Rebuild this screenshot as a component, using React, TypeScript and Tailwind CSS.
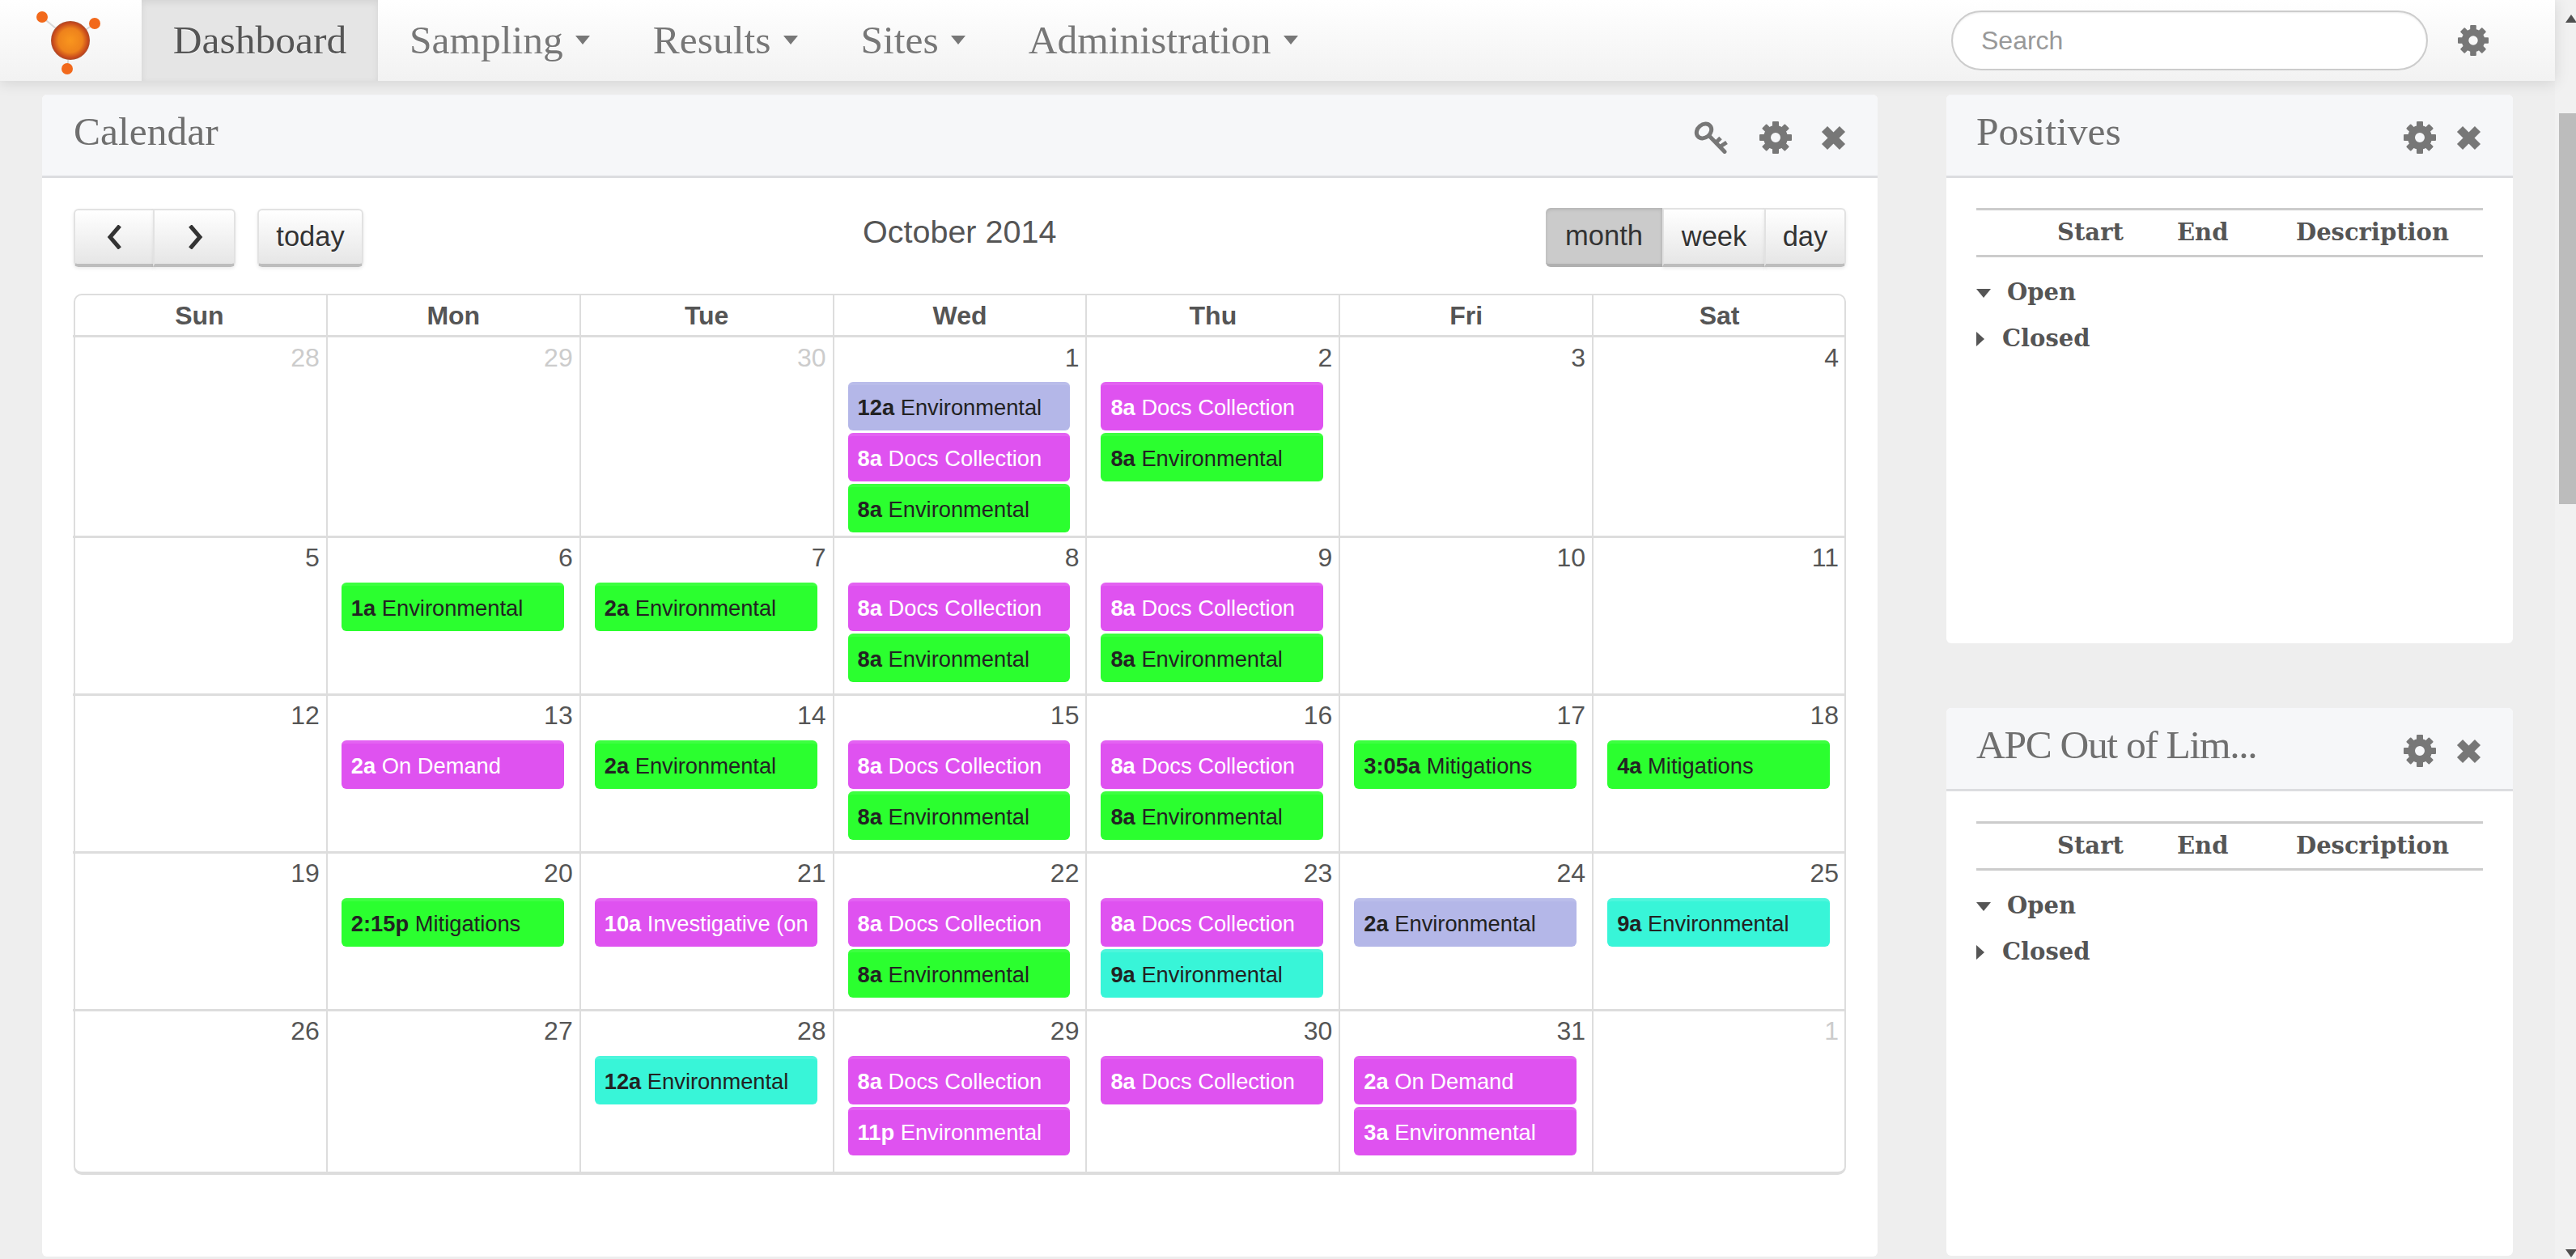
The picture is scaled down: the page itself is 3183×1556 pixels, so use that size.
import React from "react";

type Ev = { t: string; n: string; c: "g" | "p" | "l" | "c" };
type Day = { d: number; o?: boolean; e?: Ev[] };

const docs = (t = "8a"): Ev => ({ t, n: "Docs Collection", c: "p" });
const env = (t = "8a", c: Ev["c"] = "g"): Ev => ({ t, n: "Environmental", c });

const rows: { h: string; days: Day[] }[] = [
  {
    h: "h-[248px]",
    days: [
      { d: 28, o: true },
      { d: 29, o: true },
      { d: 30, o: true },
      { d: 1, e: [env("12a", "l"), docs(), env()] },
      { d: 2, e: [docs(), env()] },
      { d: 3 },
      { d: 4 },
    ],
  },
  {
    h: "h-[195px]",
    days: [
      { d: 5 },
      { d: 6, e: [env("1a")] },
      { d: 7, e: [env("2a")] },
      { d: 8, e: [docs(), env()] },
      { d: 9, e: [docs(), env()] },
      { d: 10 },
      { d: 11 },
    ],
  },
  {
    h: "h-[195px]",
    days: [
      { d: 12 },
      { d: 13, e: [{ t: "2a", n: "On Demand", c: "p" }] },
      { d: 14, e: [env("2a")] },
      { d: 15, e: [docs(), env()] },
      { d: 16, e: [docs(), env()] },
      { d: 17, e: [{ t: "3:05a", n: "Mitigations", c: "g" }] },
      { d: 18, e: [{ t: "4a", n: "Mitigations", c: "g" }] },
    ],
  },
  {
    h: "h-[195px]",
    days: [
      { d: 19 },
      { d: 20, e: [{ t: "2:15p", n: "Mitigations", c: "g" }] },
      { d: 21, e: [{ t: "10a", n: "Investigative (on", c: "p" }] },
      { d: 22, e: [docs(), env()] },
      { d: 23, e: [docs(), env("9a", "c")] },
      { d: 24, e: [env("2a", "l")] },
      { d: 25, e: [env("9a", "c")] },
    ],
  },
  {
    h: "h-[198px]",
    days: [
      { d: 26 },
      { d: 27 },
      { d: 28, e: [env("12a", "c")] },
      { d: 29, e: [docs(), env("11p", "p")] },
      { d: 30, e: [docs()] },
      { d: 31, e: [{ t: "2a", n: "On Demand", c: "p" }, env("3a", "p")] },
      { d: 1, o: true },
    ],
  },
];

const evClass: Record<Ev["c"], string> = {
  g: "bg-[#2bff2f] text-[#222] border-[#3dff40]",
  p: "bg-[#df52f0] text-white border-[#e362f2]",
  l: "bg-[#b4b7e8] text-[#222] border-[#babdea]",
  c: "bg-[#38f5d8] text-[#222] border-[#4df6dc]",
};

const serif = "font-['Liberation_Serif',serif]";

function Gear({ className }: { className: string }) {
  return (
    <svg viewBox="0 0 40 40" className={className} fill="#777">
      <circle cx="20" cy="20" r="10.5" fill="none" stroke="#777" strokeWidth="9" />
      {[0, 45, 90, 135, 180, 225, 270, 315].map((a) => (
        <rect key={a} x="16" y="0" width="8" height="9" rx="1" transform={`rotate(${a} 20 20)`} />
      ))}
    </svg>
  );
}

function Cross({ className }: { className: string }) {
  return (
    <svg viewBox="0 0 31 31" className={className} fill="none" stroke="#777" strokeWidth="10">
      <path d="M4.5 4.5 26.5 26.5M26.5 4.5 4.5 26.5" />
    </svg>
  );
}

function Key({ className }: { className: string }) {
  return (
    <svg viewBox="0 0 43 40" className={className} fill="none" stroke="#777" strokeWidth="5" strokeLinecap="round">
      <ellipse cx="12.5" cy="12" rx="10" ry="8" transform="rotate(-40 12.5 12)" />
      <path d="M20 19 38 37.5" />
      <path d="M27 26.5 33 20.5M32 31.5 40.5 26" strokeLinecap="butt" />
    </svg>
  );
}

function Caret() {
  return <span className="ml-[15px] mt-[-2px] inline-block h-0 w-0 border-x-[9px] border-t-[11px] border-x-transparent border-t-[#777]" />;
}

function NavItem({ label }: { label: string }) {
  return (
    <div className="flex h-full items-center px-[39px] text-[#777] [text-shadow:0_1px_0_#fff]">
      <span>{label}</span>
      <Caret />
    </div>
  );
}

function Navbar() {
  return (
    <nav className={`relative z-10 flex h-[100px] w-[3157px] shrink-0 items-center bg-gradient-to-b from-white to-[#f2f2f2] shadow-[0_2px_18px_rgba(0,0,0,0.12)] ${serif} text-[49.5px]`}>
      <div className="flex h-full w-[175px] shrink-0 items-center justify-start">
        <svg width="175" height="100" viewBox="0 0 175 100">
          <defs>
            <radialGradient id="orb">
              <stop offset="0%" stopColor="#f9961e" />
              <stop offset="62%" stopColor="#ee821c" />
              <stop offset="92%" stopColor="#c4461c" />
              <stop offset="100%" stopColor="#a8522f" />
            </radialGradient>
          </defs>
          <path d="M52 21 87 50 117 29M87 50 83 85" stroke="#d8d8d8" strokeWidth="2" fill="none" />
          <circle cx="87" cy="50" r="24" fill="url(#orb)" />
          <circle cx="52" cy="21" r="7" fill="#f2691b" />
          <circle cx="117" cy="29" r="7" fill="#f2691b" />
          <circle cx="83" cy="85" r="7" fill="#f2691b" />
        </svg>
      </div>
      <div className="flex h-full w-[292px] items-center justify-center bg-[#e5e5e5] text-[#555] shadow-[inset_0_3px_9px_rgba(0,0,0,0.08)] [text-shadow:0_1px_0_#fff]">
        Dashboard
      </div>
      <NavItem label="Sampling" />
      <NavItem label="Results" />
      <NavItem label="Sites" />
      <NavItem label="Administration" />
      <div className="flex-1" />
      <div className="flex h-[74px] w-[589px] items-center rounded-[37px] border-2 border-[#ccc] bg-white pl-[35px] font-['Liberation_Sans',sans-serif] text-[32px] text-[#999] shadow-[inset_0_1px_2px_rgba(0,0,0,0.08)]">
        Search
      </div>
      <Gear className="ml-[37px] mr-[82px] h-[38px] w-[38px]" />
    </nav>
  );
}

function ToolButton({ className, children }: { className: string; children: React.ReactNode }) {
  return (
    <div className={`flex items-center justify-center border-2 border-b-4 border-[#e2e2e2] border-b-[#bdbdbd] bg-gradient-to-b from-white to-[#e6e6e6] text-[34.5px] text-[#333] shadow-[0_2px_4px_rgba(0,0,0,0.08)] [text-shadow:0_1px_2px_rgba(255,255,255,0.75)] ${className}`}>
      {children}
    </div>
  );
}

function Calendar() {
  return (
    <section className="h-[1436px] w-[2268px] shrink-0 overflow-hidden rounded-[6px] bg-white">
      <header className="flex h-[103px] items-center border-b-[3px] border-[#dcdde0] bg-[#f6f7f9] pl-[39px] pr-[39px]">
        <h2 className={`${serif} -mt-[8px] flex-1 text-[49.5px] font-normal text-[#6f6f6f]`}>Calendar</h2>
        <div className="flex items-center pt-[6px]">
          <Key className="h-[40px] w-[43px]" />
          <Gear className="ml-[38px] h-[40px] w-[40px]" />
          <Cross className="ml-[36px] h-[31px] w-[31px]" />
        </div>
      </header>
      <div className="pl-[39px] pt-[37px]">
        <div className="flex h-[73px] w-[2190px] items-start">
          <ToolButton className="mt-[1px] h-[72px] w-[100px] rounded-l-[6px]">
            <svg width="24" height="30" viewBox="0 0 24 30" fill="none" stroke="#333" strokeWidth="5"><path d="M19 1 7 15 19 29" /></svg>
          </ToolButton>
          <ToolButton className="-ml-[2px] mt-[1px] h-[72px] w-[102px] rounded-r-[6px] pl-[4px]">
            <svg width="24" height="30" viewBox="0 0 24 30" fill="none" stroke="#333" strokeWidth="5"><path d="M5 1 17 15 5 29" /></svg>
          </ToolButton>
          <ToolButton className="ml-[27px] mt-[1px] h-[72px] w-[131px] rounded-[6px]">today</ToolButton>
          <div className="flex-1 pl-[617px] pt-[6px] font-['Liberation_Sans',sans-serif] text-[39.5px] leading-[46px] text-[#555]">October 2014</div>
          <div className="flex h-[73px] w-[371px]">
            <div className="flex h-full w-[144px] items-center justify-center rounded-l-[6px] border-b-4 border-[#b0b0b0] bg-[#cbcbcb] text-[34.5px] text-[#333] shadow-[inset_0_2px_4px_rgba(0,0,0,0.12)]">month</div>
            <ToolButton className="h-full w-[128px]">week</ToolButton>
            <ToolButton className="-ml-[2px] h-full w-[101px] rounded-r-[6px]">day</ToolButton>
          </div>
        </div>
        <div className="mt-[33px] w-[2190px] rounded-[10px] border-2 border-b-4 border-[#ddd] font-['Liberation_Sans',sans-serif]">
          <div className="-ml-[3px] -mr-[1px] grid h-[52px] grid-cols-7 border-b-[3px] border-[#ddd]">
            {["Sun", "Mon", "Tue", "Wed", "Thu", "Fri", "Sat"].map((d, i) => (
              <div key={d} className={`flex items-center justify-center text-[32px] font-bold text-[#555] ${i ? "border-l-2 border-[#ddd]" : ""}`}>{d}</div>
            ))}
          </div>
          {rows.map((r, ri) => (
            <div key={ri} className={`-ml-[3px] -mr-[1px] grid grid-cols-7 ${r.h} ${ri < 4 ? "border-b-[3px] border-[#ddd]" : ""}`}>
              {r.days.map((c, ci) => (
                <div key={ci} className={`min-w-0 ${ci ? "border-l-2 border-[#ddd]" : ""}`}>
                  <div className={`h-[55px] pr-[8px] text-right text-[32px] leading-[36px] ${ri ? "pt-[6px]" : "pt-[7px]"} ${c.o ? "text-[#ccc]" : "text-[#555]"}`}>{c.d}</div>
                  <div className="flex flex-col gap-[3px] pl-[17px] pr-[19px]">
                    {c.e?.map((e, k) => (
                      <div key={k} className={`h-[60px] overflow-hidden whitespace-nowrap rounded-[6px] border-t-[4px] pl-[12px] text-[27.3px] leading-[56px] ${evClass[e.c]}`}>
                        <b>{e.t}</b> {e.n}
                      </div>
                    ))}
                  </div>
                </div>
              ))}
            </div>
          ))}
        </div>
      </div>
    </section>
  );
}

function SidePanel({ title, h, titleClass }: { title: string; h: string; titleClass?: string }) {
  return (
    <section className={`w-[700px] overflow-hidden rounded-[6px] bg-white ${h}`}>
      <header className="flex h-[103px] items-center border-b-[3px] border-[#dcdde0] bg-[#f6f7f9] pl-[37px] pr-[39px]">
        <h2 className={`${serif} -mt-[8px] flex-1 whitespace-nowrap text-[49.5px] font-normal text-[#6f6f6f] ${titleClass ?? ""}`}>{title}</h2>
        <div className="flex items-center pt-[6px]">
          <Gear className="h-[40px] w-[40px]" />
          <Cross className="ml-[25px] h-[31px] w-[31px]" />
        </div>
      </header>
      <div className="px-[37px] pt-[37px] font-['DejaVu_Serif',serif] text-[29px] font-bold text-[#555]">
        <div className="flex h-[61px] items-center border-y-[3px] border-[#ccc]">
          <span className="ml-[100px] w-[148px]">Start</span>
          <span className="w-[147px]">End</span>
          <span>Description</span>
        </div>
        <div className="mt-[24px] flex h-[40px] items-center">
          <span className="h-0 w-0 border-x-[9px] border-t-[11px] border-x-transparent border-t-[#555]" />
          <span className="ml-[20px]">Open</span>
        </div>
        <div className="mt-[17px] flex h-[40px] items-center">
          <span className="h-0 w-0 border-y-[9px] border-l-[10px] border-y-transparent border-l-[#555]" />
          <span className="ml-[22px]">Closed</span>
        </div>
      </div>
    </section>
  );
}

function Scrollbar() {
  return (
    <div className="relative h-full w-[26px] shrink-0 overflow-hidden bg-[#f1f1f1]">
      <div className="absolute left-[13px] top-[18px] h-0 w-0 border-x-[7px] border-b-[10px] border-x-transparent border-b-[#505050]" />
      <div className="absolute left-[5px] right-0 top-[140px] h-[483px] bg-[#bcbcbc]" />
      <div className="absolute bottom-[2px] left-[13px] h-0 w-0 border-x-[7px] border-t-[10px] border-x-transparent border-t-[#505050]" />
    </div>
  );
}

export default function App() {
  return (
    <div className="flex h-[1556px] w-[3183px] overflow-hidden bg-[#eee] font-['Liberation_Sans',sans-serif]">
      <div className="flex w-[3157px] shrink-0 flex-col">
        <Navbar />
        <main className="flex gap-[85px] pl-[52px] pt-[17px]">
          <Calendar />
          <div className="flex flex-col gap-[80px]">
            <SidePanel title="Positives" h="h-[678px]" />
            <SidePanel title="APC Out of Lim..." h="h-[677px]" titleClass="tracking-[-1.3px]" />
          </div>
        </main>
      </div>
      <Scrollbar />
    </div>
  );
}
